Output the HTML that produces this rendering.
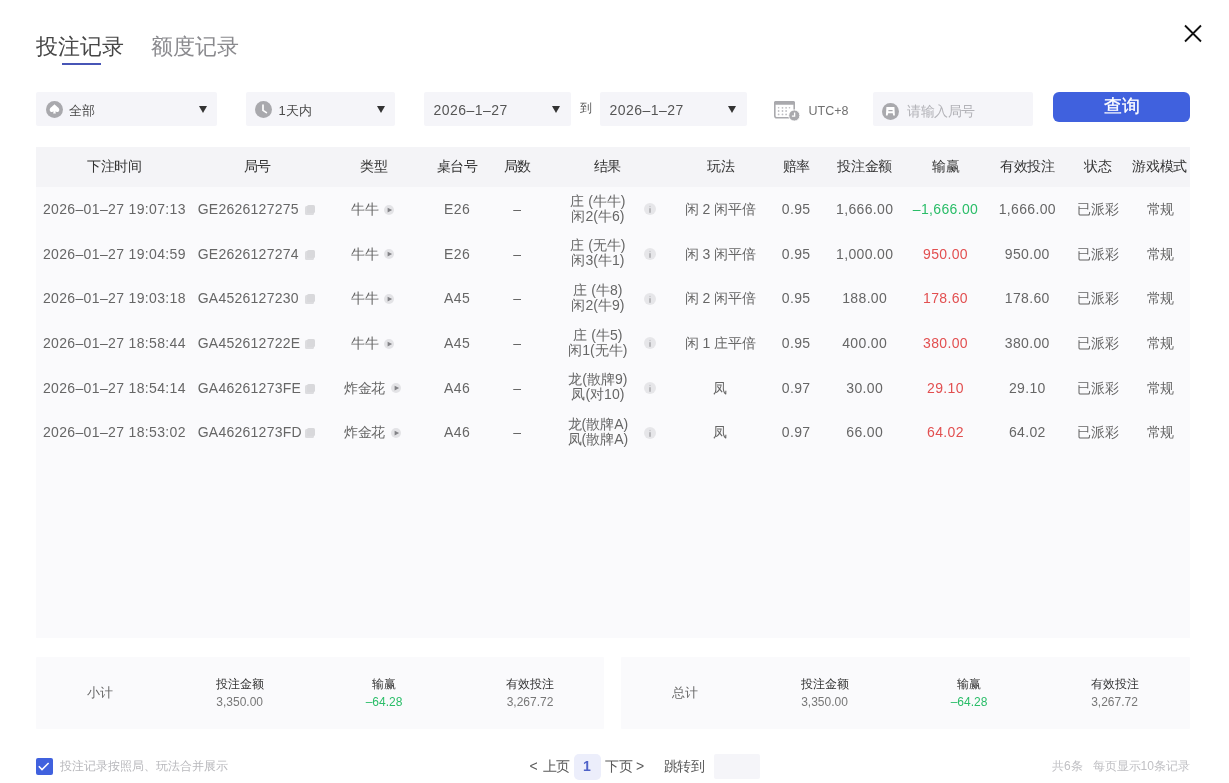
<!DOCTYPE html>
<html><head><meta charset="utf-8">
<style>
html,body{margin:0;padding:0;background:#fff;}
body{width:1229px;height:783px;position:relative;overflow:hidden;font-family:"Liberation Sans",sans-serif;color:#666;}
.a{position:absolute;white-space:nowrap;line-height:20px;height:20px;}
.c{transform:translateX(-50%);}
.bx{position:absolute;background:#f5f5f9;border-radius:2px;}
.tri{position:absolute;width:0;height:0;border-left:4.5px solid transparent;border-right:4.5px solid transparent;border-top:7px solid #333;}
.hd{font-size:14px;color:#333;letter-spacing:-0.4px;}
.cell{font-size:14px;color:#666;letter-spacing:0.35px;}
.g{color:#2abd68;}
.r{color:#e24f50;}
.ico-copy{position:absolute;width:10px;height:10px;}
.ico-play{position:absolute;width:10px;height:10px;}
.ico-info{position:absolute;width:12px;height:12px;}
</style></head><body><div id="wrap" style="position:absolute;left:0;top:0;width:1229px;height:783px;will-change:transform">

<!-- tabs -->
<div class="a" style="left:35.5px;top:33.7px;font-size:22px;line-height:26px;height:26px;color:#464646;">投注记录</div>
<div style="position:absolute;left:62px;top:63px;width:39px;height:2px;background:#4755b6;"></div>
<div class="a" style="left:151px;top:33.7px;font-size:22px;line-height:26px;height:26px;color:#8a8a8e;">额度记录</div>
<!-- close -->
<svg style="position:absolute;left:1183px;top:24px" width="20" height="19" viewBox="0 0 20 19"><path d="M2 1.5 L18 17.5 M18 1.5 L2 17.5" stroke="#111" stroke-width="1.8" fill="none"/></svg>

<!-- filters -->
<div class="bx" style="left:36px;top:92px;width:181px;height:34px;"></div>
<svg style="position:absolute;left:46px;top:101px" width="17" height="17" viewBox="0 0 17 17"><circle cx="8.5" cy="8.5" r="8.5" fill="#a9a9ad"/><path d="M8.5 3.3 C7 5.2 3.7 6.6 3.7 8.9 C3.7 10.7 5.7 11.5 7.7 10.5 L7.1 12.4 H9.9 L9.3 10.5 C11.3 11.5 13.3 10.7 13.3 8.9 C13.3 6.6 10 5.2 8.5 3.3 Z" fill="#fff"/></svg>
<div class="a" style="left:69px;top:100.5px;font-size:13px;color:#4a4a4a;">全部</div>
<div class="tri" style="left:198.5px;top:106px;"></div>

<div class="bx" style="left:246px;top:92px;width:149px;height:34px;"></div>
<svg style="position:absolute;left:255px;top:101px" width="17" height="17" viewBox="0 0 17 17"><circle cx="8.5" cy="8.5" r="8.5" fill="#a9a9ad"/><path d="M8 4.2 L8 9.4 L11.4 11.6" stroke="#fff" stroke-width="1.7" fill="none" stroke-linecap="round" stroke-linejoin="round"/></svg>
<div class="a" style="left:278.5px;top:100.5px;font-size:13px;color:#4a4a4a;">1天内</div>
<div class="tri" style="left:376.5px;top:106px;"></div>

<div class="bx" style="left:423.5px;top:92px;width:147px;height:34px;"></div>
<div class="a" style="left:433.5px;top:100px;font-size:14px;color:#555;letter-spacing:0.45px;">2026–1–27</div>
<div class="tri" style="left:551.5px;top:106px;"></div>
<div class="a" style="left:579.5px;top:98px;font-size:12px;color:#555;">到</div>
<div class="bx" style="left:599.5px;top:92px;width:147px;height:34px;"></div>
<div class="a" style="left:609.5px;top:100px;font-size:14px;color:#555;letter-spacing:0.45px;">2026–1–27</div>
<div class="tri" style="left:727.5px;top:106px;"></div>

<svg style="position:absolute;left:773px;top:100px" width="28" height="22" viewBox="0 0 28 22">
<rect x="1.8" y="1.8" width="19.4" height="16" rx="2" fill="none" stroke="#a9a9ad" stroke-width="1.6"/>
<rect x="1" y="1" width="21" height="3.8" rx="1.5" fill="#a9a9ad"/>
<g fill="#bdbdc1"><circle cx="5.6" cy="7.8" r="0.8"/><circle cx="9.5" cy="7.8" r="0.9"/><circle cx="13.1" cy="7.8" r="0.9"/><circle cx="16.5" cy="7.8" r="0.8"/><circle cx="5.6" cy="11" r="0.9"/><circle cx="9.5" cy="11" r="0.9"/><circle cx="13.1" cy="11" r="0.9"/><circle cx="5.6" cy="14.4" r="0.9"/><circle cx="9.5" cy="14.4" r="0.9"/><circle cx="13.1" cy="14.4" r="0.9"/></g>
<circle cx="21.3" cy="15.5" r="5.6" fill="#a9a9ad" stroke="#fff" stroke-width="1"/>
<path d="M21.6 12.6 L21.6 16.2 L18.9 16.2" stroke="#fff" stroke-width="1.3" fill="none"/>
</svg>
<div class="a" style="left:808.5px;top:101px;font-size:12.5px;color:#707070;">UTC+8</div>

<div class="bx" style="left:873px;top:92px;width:160px;height:34px;"></div>
<svg style="position:absolute;left:882px;top:102.8px" width="17" height="17" viewBox="0 0 17 17"><circle cx="8.5" cy="8.5" r="8.5" fill="#a9a9ad"/><path d="M4.4 4 H12.4 L12.9 12.6 H11.2 L10.8 10.2 H6.2 L5.6 12.6 H3.9 Z M6.4 6.9 V8.3 H10.6 V6.9 Z" fill="#fff" fill-rule="evenodd"/></svg>
<div class="a" style="left:907px;top:100.5px;font-size:14px;letter-spacing:-0.5px;color:#b3b3b8;">请输入局号</div>

<div style="position:absolute;left:1053px;top:92px;width:137px;height:30px;background:#4061de;border-radius:6px;"></div>
<div class="a c" style="left:1121.5px;top:94px;font-size:18px;line-height:24px;height:24px;color:#fff;-webkit-text-stroke:0.3px #fff;">查询</div>

<!-- table -->
<div style="position:absolute;left:36px;top:147px;width:1154px;height:40px;background:#f4f4f7;"></div>
<div style="position:absolute;left:36px;top:187px;width:1154px;height:451px;background:#fafafc;"></div>

<div id="hdr">
<div class="a c hd" style="left:114.4px;top:156px;">下注时间</div>
<div class="a c hd" style="left:257.2px;top:156px;">局号</div>
<div class="a c hd" style="left:373.6px;top:156px;">类型</div>
<div class="a c hd" style="left:457px;top:156px;">桌台号</div>
<div class="a c hd" style="left:517.3px;top:156px;">局数</div>
<div class="a c hd" style="left:607.2px;top:156px;">结果</div>
<div class="a c hd" style="left:720.6px;top:156px;">玩法</div>
<div class="a c hd" style="left:796.2px;top:156px;">赔率</div>
<div class="a c hd" style="left:864.7px;top:156px;">投注金额</div>
<div class="a c hd" style="left:945.8px;top:156px;">输赢</div>
<div class="a c hd" style="left:1027.2px;top:156px;">有效投注</div>
<div class="a c hd" style="left:1098px;top:156px;">状态</div>
<div class="a c hd" style="left:1159.7px;top:156px;">游戏模式</div>
</div>

<div id="rows">
<div class="a c cell" style="left:114.4px;top:199.0px;">2026–01–27 19:07:13</div>
<div class="a cell" style="left:197.7px;top:199.0px;letter-spacing:0.25px">GE2626127275</div>
<svg class="ico-copy" style="left:304.5px;top:204.8px" viewBox="0 0 10 10"><rect x="0" y="1" width="9" height="9" rx="1.5" fill="#dcdcdf"/><rect x="2" y="0" width="8" height="8" rx="1.5" fill="#d8d8db"/></svg>
<div class="a cell" style="left:351.2px;top:199.0px;letter-spacing:-0.5px">牛牛</div>
<svg class="ico-play" style="left:383.6px;top:204.7px" viewBox="0 0 10 10"><circle cx="5" cy="5" r="5" fill="#e3e3e6"/><path d="M3.6 2.7 L8.1 5.1 L3.6 7.5 Z" fill="#828286"/></svg>
<div class="a c cell" style="left:457.1px;top:199.0px;">E26</div>
<div class="a c cell" style="left:517.3px;top:199.0px;">–</div>
<div class="a c cell" style="left:597.9px;top:193.5px;height:30px;line-height:15px;text-align:center;letter-spacing:0">庄 (牛牛)<br>闲2(牛6)</div>
<svg class="ico-info" style="left:644px;top:203.4px" viewBox="0 0 12 12"><circle cx="6" cy="6" r="6" fill="#e6e6e9"/><circle cx="6" cy="3.4" r="0.75" fill="#c4c4c8"/><rect x="5.4" y="5.2" width="1.2" height="4.6" fill="#9c9ca0"/></svg>
<div class="a c cell" style="left:720.4px;top:199.0px;letter-spacing:0">闲 2 闲平倍</div>
<div class="a c cell" style="left:796.2px;top:199.0px;">0.95</div>
<div class="a c cell" style="left:864.7px;top:199.0px;">1,666.00</div>
<div class="a c cell g" style="left:945.5px;top:199.0px;">–1,666.00</div>
<div class="a c cell" style="left:1027.3px;top:199.0px;">1,666.00</div>
<div class="a c cell" style="left:1098.4px;top:199.0px;letter-spacing:0">已派彩</div>
<div class="a c cell" style="left:1160px;top:199.0px;letter-spacing:-0.5px">常规</div>
<div class="a c cell" style="left:114.4px;top:243.7px;">2026–01–27 19:04:59</div>
<div class="a cell" style="left:197.7px;top:243.7px;letter-spacing:0.25px">GE2626127274</div>
<svg class="ico-copy" style="left:304.5px;top:249.5px" viewBox="0 0 10 10"><rect x="0" y="1" width="9" height="9" rx="1.5" fill="#dcdcdf"/><rect x="2" y="0" width="8" height="8" rx="1.5" fill="#d8d8db"/></svg>
<div class="a cell" style="left:351.2px;top:243.7px;letter-spacing:-0.5px">牛牛</div>
<svg class="ico-play" style="left:383.6px;top:249.4px" viewBox="0 0 10 10"><circle cx="5" cy="5" r="5" fill="#e3e3e6"/><path d="M3.6 2.7 L8.1 5.1 L3.6 7.5 Z" fill="#828286"/></svg>
<div class="a c cell" style="left:457.1px;top:243.7px;">E26</div>
<div class="a c cell" style="left:517.3px;top:243.7px;">–</div>
<div class="a c cell" style="left:597.9px;top:238.2px;height:30px;line-height:15px;text-align:center;letter-spacing:0">庄 (无牛)<br>闲3(牛1)</div>
<svg class="ico-info" style="left:644px;top:248.1px" viewBox="0 0 12 12"><circle cx="6" cy="6" r="6" fill="#e6e6e9"/><circle cx="6" cy="3.4" r="0.75" fill="#c4c4c8"/><rect x="5.4" y="5.2" width="1.2" height="4.6" fill="#9c9ca0"/></svg>
<div class="a c cell" style="left:720.4px;top:243.7px;letter-spacing:0">闲 3 闲平倍</div>
<div class="a c cell" style="left:796.2px;top:243.7px;">0.95</div>
<div class="a c cell" style="left:864.7px;top:243.7px;">1,000.00</div>
<div class="a c cell r" style="left:945.5px;top:243.7px;">950.00</div>
<div class="a c cell" style="left:1027.3px;top:243.7px;">950.00</div>
<div class="a c cell" style="left:1098.4px;top:243.7px;letter-spacing:0">已派彩</div>
<div class="a c cell" style="left:1160px;top:243.7px;letter-spacing:-0.5px">常规</div>
<div class="a c cell" style="left:114.4px;top:288.4px;">2026–01–27 19:03:18</div>
<div class="a cell" style="left:197.7px;top:288.4px;letter-spacing:0.25px">GA4526127230</div>
<svg class="ico-copy" style="left:304.5px;top:294.2px" viewBox="0 0 10 10"><rect x="0" y="1" width="9" height="9" rx="1.5" fill="#dcdcdf"/><rect x="2" y="0" width="8" height="8" rx="1.5" fill="#d8d8db"/></svg>
<div class="a cell" style="left:351.2px;top:288.4px;letter-spacing:-0.5px">牛牛</div>
<svg class="ico-play" style="left:383.6px;top:294.1px" viewBox="0 0 10 10"><circle cx="5" cy="5" r="5" fill="#e3e3e6"/><path d="M3.6 2.7 L8.1 5.1 L3.6 7.5 Z" fill="#828286"/></svg>
<div class="a c cell" style="left:457.1px;top:288.4px;">A45</div>
<div class="a c cell" style="left:517.3px;top:288.4px;">–</div>
<div class="a c cell" style="left:597.9px;top:282.9px;height:30px;line-height:15px;text-align:center;letter-spacing:0">庄 (牛8)<br>闲2(牛9)</div>
<svg class="ico-info" style="left:644px;top:292.8px" viewBox="0 0 12 12"><circle cx="6" cy="6" r="6" fill="#e6e6e9"/><circle cx="6" cy="3.4" r="0.75" fill="#c4c4c8"/><rect x="5.4" y="5.2" width="1.2" height="4.6" fill="#9c9ca0"/></svg>
<div class="a c cell" style="left:720.4px;top:288.4px;letter-spacing:0">闲 2 闲平倍</div>
<div class="a c cell" style="left:796.2px;top:288.4px;">0.95</div>
<div class="a c cell" style="left:864.7px;top:288.4px;">188.00</div>
<div class="a c cell r" style="left:945.5px;top:288.4px;">178.60</div>
<div class="a c cell" style="left:1027.3px;top:288.4px;">178.60</div>
<div class="a c cell" style="left:1098.4px;top:288.4px;letter-spacing:0">已派彩</div>
<div class="a c cell" style="left:1160px;top:288.4px;letter-spacing:-0.5px">常规</div>
<div class="a c cell" style="left:114.4px;top:333.0px;">2026–01–27 18:58:44</div>
<div class="a cell" style="left:197.7px;top:333.0px;letter-spacing:0.25px">GA452612722E</div>
<svg class="ico-copy" style="left:304.5px;top:338.8px" viewBox="0 0 10 10"><rect x="0" y="1" width="9" height="9" rx="1.5" fill="#dcdcdf"/><rect x="2" y="0" width="8" height="8" rx="1.5" fill="#d8d8db"/></svg>
<div class="a cell" style="left:351.2px;top:333.0px;letter-spacing:-0.5px">牛牛</div>
<svg class="ico-play" style="left:383.6px;top:338.7px" viewBox="0 0 10 10"><circle cx="5" cy="5" r="5" fill="#e3e3e6"/><path d="M3.6 2.7 L8.1 5.1 L3.6 7.5 Z" fill="#828286"/></svg>
<div class="a c cell" style="left:457.1px;top:333.0px;">A45</div>
<div class="a c cell" style="left:517.3px;top:333.0px;">–</div>
<div class="a c cell" style="left:597.9px;top:327.5px;height:30px;line-height:15px;text-align:center;letter-spacing:0">庄 (牛5)<br>闲1(无牛)</div>
<svg class="ico-info" style="left:644px;top:337.4px" viewBox="0 0 12 12"><circle cx="6" cy="6" r="6" fill="#e6e6e9"/><circle cx="6" cy="3.4" r="0.75" fill="#c4c4c8"/><rect x="5.4" y="5.2" width="1.2" height="4.6" fill="#9c9ca0"/></svg>
<div class="a c cell" style="left:720.4px;top:333.0px;letter-spacing:0">闲 1 庄平倍</div>
<div class="a c cell" style="left:796.2px;top:333.0px;">0.95</div>
<div class="a c cell" style="left:864.7px;top:333.0px;">400.00</div>
<div class="a c cell r" style="left:945.5px;top:333.0px;">380.00</div>
<div class="a c cell" style="left:1027.3px;top:333.0px;">380.00</div>
<div class="a c cell" style="left:1098.4px;top:333.0px;letter-spacing:0">已派彩</div>
<div class="a c cell" style="left:1160px;top:333.0px;letter-spacing:-0.5px">常规</div>
<div class="a c cell" style="left:114.4px;top:377.7px;">2026–01–27 18:54:14</div>
<div class="a cell" style="left:197.7px;top:377.7px;letter-spacing:0.25px">GA46261273FE</div>
<svg class="ico-copy" style="left:304.5px;top:383.5px" viewBox="0 0 10 10"><rect x="0" y="1" width="9" height="9" rx="1.5" fill="#dcdcdf"/><rect x="2" y="0" width="8" height="8" rx="1.5" fill="#d8d8db"/></svg>
<div class="a cell" style="left:344.0px;top:377.7px;letter-spacing:-0.5px">炸金花</div>
<svg class="ico-play" style="left:390.6px;top:383.4px" viewBox="0 0 10 10"><circle cx="5" cy="5" r="5" fill="#e3e3e6"/><path d="M3.6 2.7 L8.1 5.1 L3.6 7.5 Z" fill="#828286"/></svg>
<div class="a c cell" style="left:457.1px;top:377.7px;">A46</div>
<div class="a c cell" style="left:517.3px;top:377.7px;">–</div>
<div class="a c cell" style="left:597.9px;top:372.2px;height:30px;line-height:15px;text-align:center;letter-spacing:0">龙(散牌9)<br>凤(对10)</div>
<svg class="ico-info" style="left:644px;top:382.1px" viewBox="0 0 12 12"><circle cx="6" cy="6" r="6" fill="#e6e6e9"/><circle cx="6" cy="3.4" r="0.75" fill="#c4c4c8"/><rect x="5.4" y="5.2" width="1.2" height="4.6" fill="#9c9ca0"/></svg>
<div class="a c cell" style="left:720.4px;top:377.7px;letter-spacing:0">凤</div>
<div class="a c cell" style="left:796.2px;top:377.7px;">0.97</div>
<div class="a c cell" style="left:864.7px;top:377.7px;">30.00</div>
<div class="a c cell r" style="left:945.5px;top:377.7px;">29.10</div>
<div class="a c cell" style="left:1027.3px;top:377.7px;">29.10</div>
<div class="a c cell" style="left:1098.4px;top:377.7px;letter-spacing:0">已派彩</div>
<div class="a c cell" style="left:1160px;top:377.7px;letter-spacing:-0.5px">常规</div>
<div class="a c cell" style="left:114.4px;top:422.4px;">2026–01–27 18:53:02</div>
<div class="a cell" style="left:197.7px;top:422.4px;letter-spacing:0.25px">GA46261273FD</div>
<svg class="ico-copy" style="left:304.5px;top:428.2px" viewBox="0 0 10 10"><rect x="0" y="1" width="9" height="9" rx="1.5" fill="#dcdcdf"/><rect x="2" y="0" width="8" height="8" rx="1.5" fill="#d8d8db"/></svg>
<div class="a cell" style="left:344.0px;top:422.4px;letter-spacing:-0.5px">炸金花</div>
<svg class="ico-play" style="left:390.6px;top:428.1px" viewBox="0 0 10 10"><circle cx="5" cy="5" r="5" fill="#e3e3e6"/><path d="M3.6 2.7 L8.1 5.1 L3.6 7.5 Z" fill="#828286"/></svg>
<div class="a c cell" style="left:457.1px;top:422.4px;">A46</div>
<div class="a c cell" style="left:517.3px;top:422.4px;">–</div>
<div class="a c cell" style="left:597.9px;top:416.9px;height:30px;line-height:15px;text-align:center;letter-spacing:0">龙(散牌A)<br>凤(散牌A)</div>
<svg class="ico-info" style="left:644px;top:426.8px" viewBox="0 0 12 12"><circle cx="6" cy="6" r="6" fill="#e6e6e9"/><circle cx="6" cy="3.4" r="0.75" fill="#c4c4c8"/><rect x="5.4" y="5.2" width="1.2" height="4.6" fill="#9c9ca0"/></svg>
<div class="a c cell" style="left:720.4px;top:422.4px;letter-spacing:0">凤</div>
<div class="a c cell" style="left:796.2px;top:422.4px;">0.97</div>
<div class="a c cell" style="left:864.7px;top:422.4px;">66.00</div>
<div class="a c cell r" style="left:945.5px;top:422.4px;">64.02</div>
<div class="a c cell" style="left:1027.3px;top:422.4px;">64.02</div>
<div class="a c cell" style="left:1098.4px;top:422.4px;letter-spacing:0">已派彩</div>
<div class="a c cell" style="left:1160px;top:422.4px;letter-spacing:-0.5px">常规</div>
</div>

<!-- summary -->
<div style="position:absolute;left:36px;top:657px;width:568px;height:71.5px;background:#fafafc;border-radius:1px;"></div>
<div style="position:absolute;left:621px;top:657px;width:569px;height:71.5px;background:#fafafc;border-radius:1px;"></div>

<div class="a c" style="left:100px;top:683px;font-size:13px;color:#666;">小计</div>
<div class="a c" style="left:239.7px;top:674px;font-size:12px;color:#333;">投注金额</div>
<div class="a c" style="left:239.7px;top:692px;font-size:12px;color:#777;">3,350.00</div>
<div class="a c" style="left:384px;top:674px;font-size:12px;color:#333;">输赢</div>
<div class="a c g" style="left:384px;top:692px;font-size:12px;">–64.28</div>
<div class="a c" style="left:530px;top:674px;font-size:12px;color:#333;">有效投注</div>
<div class="a c" style="left:530px;top:692px;font-size:12px;color:#777;">3,267.72</div>

<div class="a c" style="left:685px;top:683px;font-size:13px;color:#666;">总计</div>
<div class="a c" style="left:824.5px;top:674px;font-size:12px;color:#333;">投注金额</div>
<div class="a c" style="left:824.5px;top:692px;font-size:12px;color:#777;">3,350.00</div>
<div class="a c" style="left:969px;top:674px;font-size:12px;color:#333;">输赢</div>
<div class="a c g" style="left:969px;top:692px;font-size:12px;">–64.28</div>
<div class="a c" style="left:1114.5px;top:674px;font-size:12px;color:#333;">有效投注</div>
<div class="a c" style="left:1114.5px;top:692px;font-size:12px;color:#777;">3,267.72</div>

<!-- footer -->
<svg style="position:absolute;left:36px;top:758px" width="17" height="17" viewBox="0 0 17 17"><rect width="17" height="17" rx="2" fill="#4061de"/><path d="M2.8 8.3 L6 11.6 L12.6 5" stroke="#fff" stroke-width="1.5" fill="none"/></svg>
<div class="a" style="left:60px;top:756px;font-size:12px;color:#b8b8bc;">投注记录按照局、玩法合并展示</div>

<div class="a" style="left:529.5px;top:756px;font-size:14px;color:#5a5a5a;">&lt;</div>
<div class="a" style="left:542.5px;top:756px;font-size:14px;color:#5a5a5a;letter-spacing:-0.5px">上页</div>
<div style="position:absolute;left:573.5px;top:753.7px;width:27px;height:26px;background:#eceefb;border-radius:5px;"></div>
<div class="a c" style="left:586.8px;top:756px;font-size:14px;color:#4f62c8;font-weight:bold;">1</div>
<div class="a" style="left:605px;top:756px;font-size:14px;color:#5a5a5a;letter-spacing:-0.5px">下页</div>
<div class="a" style="left:636px;top:756px;font-size:14px;color:#5a5a5a;">&gt;</div>
<div class="a" style="left:664px;top:756px;font-size:14px;letter-spacing:-0.7px;color:#5a5a5a;">跳转到</div>
<div style="position:absolute;left:714px;top:753.5px;width:46px;height:25px;background:#f5f5f9;border-radius:2px;"></div>
<div class="a" style="left:1052px;top:756px;font-size:12px;color:#c0c0c4;">共6条</div>
<div class="a" style="left:1092.5px;top:756px;font-size:12px;color:#c0c0c4;">每页显示10条记录</div>

</div></body></html>
